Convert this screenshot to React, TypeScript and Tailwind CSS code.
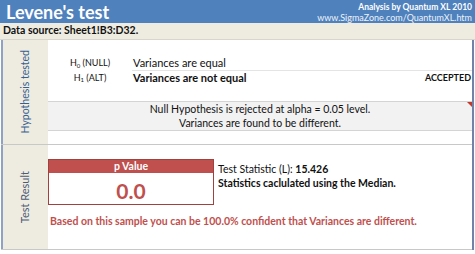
export default function App() {
  return (
    <div className="w-[475px] h-[254px] bg-white overflow-hidden text-[#111] font-['Lato','Open_Sans',sans-serif]">
      <div className="h-[23px] bg-[#4f81bd] flex justify-between items-start">
        <div className="pl-[6px] text-white font-bold text-[18px] leading-[24px]">Levene's test</div>
        <div className="flex flex-col items-end pr-[3px] pt-[2px] text-white">
          <div className="text-[8.5px] font-bold leading-[10px]">Analysis by Quantum XL 2010</div>
          <div className="text-[9px] leading-[10px] mt-[1px] text-[#eef3fa]">www.SigmaZone.com/QuantumXL.htm</div>
        </div>
      </div>
      <div className="h-[17px] bg-[#eeece1] border-b border-[#d8d6cc] flex items-center px-[3px] text-[10.5px] font-bold">
        Data source: Sheet1!B3:D32.
      </div>

      <div className="ml-[1px] mr-[1px] border-r-2 border-[#6f84ab]">
        {/* hypothesis section */}
        <div className="flex h-[105px] border-b border-[#c8c8c8]">
          <div className="w-[47px] shrink-0 bg-[#eeece1] border-l-2 border-[#8ea3c3] flex items-center justify-center">
            <div className="[writing-mode:vertical-rl] rotate-180 text-[10.5px] text-[#366092]">Hypothesis tested</div>
          </div>
          <div className="flex-1 flex flex-col pt-[16px]">
            <div className="flex h-[14px] items-center text-[11px]">
              <div className="w-[84px] text-center text-[9px]">
                H<sub className="text-[6px]">0</sub> (NULL)
              </div>
              <div className="pl-[1px]">Variances are equal</div>
            </div>
            <div className="flex h-[15px] items-center text-[11px]">
              <div className="w-[84px] text-center text-[9px]">
                H<sub className="text-[6px]">1</sub> (ALT)
              </div>
              <div className="flex-1 flex h-full items-center border-t border-[#e4e4e4]">
                <div className="pl-[1px] font-bold flex-1">Variances are not equal</div>
                <div className="font-bold text-[9px] pr-[1px]">ACCEPTED</div>
              </div>
            </div>
            <div className="mt-[16px] h-[30px] bg-[#f2f2f2] border-y border-[#d4d4d4] flex flex-col items-center justify-center text-[10.5px] leading-[14px] relative">
              <div>Null Hypothesis is rejected at alpha = 0.05 level.</div>
              <div>Variances are found to be different.</div>
              <div className="absolute right-0 top-0 w-0 h-0 border-l-[5px] border-l-transparent border-t-[5px] border-t-[#c0392b]" />
            </div>
          </div>
        </div>

        {/* test result section */}
        <div className="flex h-[105px] border-b border-[#c8c8c8]">
          <div className="w-[47px] shrink-0 bg-[#eeece1] border-l-2 border-[#8ea3c3] flex items-center justify-center">
            <div className="[writing-mode:vertical-rl] rotate-180 text-[11px] text-[#4d5b78]">Test Result</div>
          </div>
          <div className="flex-1 flex flex-col pt-[14px]">
            <div className="flex">
              <div className="w-[166px] h-[46px] border border-[#a0413e] flex flex-col">
                <div className="h-[13px] bg-[#c0504d] text-white font-bold text-[10.5px] leading-[13px] text-center">p Value</div>
                <div className="flex-1 flex items-center justify-center pt-[2px] text-[#c0504d] font-bold text-[21px]">0.0</div>
              </div>
              <div className="pl-[4px] text-[10.5px] leading-[14px] pt-[3px]">
                <div>
                  Test Statistic (L): <span className="font-bold">15.426</span>
                </div>
                <div className="font-bold">Statistics caclulated using the Median.</div>
              </div>
            </div>
            <div className="pl-[2px] mt-[9px] text-[10.5px] font-bold text-[#c0504d]">
              Based on this sample you can be 100.0% confident that Variances are different.
            </div>
          </div>
        </div>
      </div>
    </div>
  );
}
